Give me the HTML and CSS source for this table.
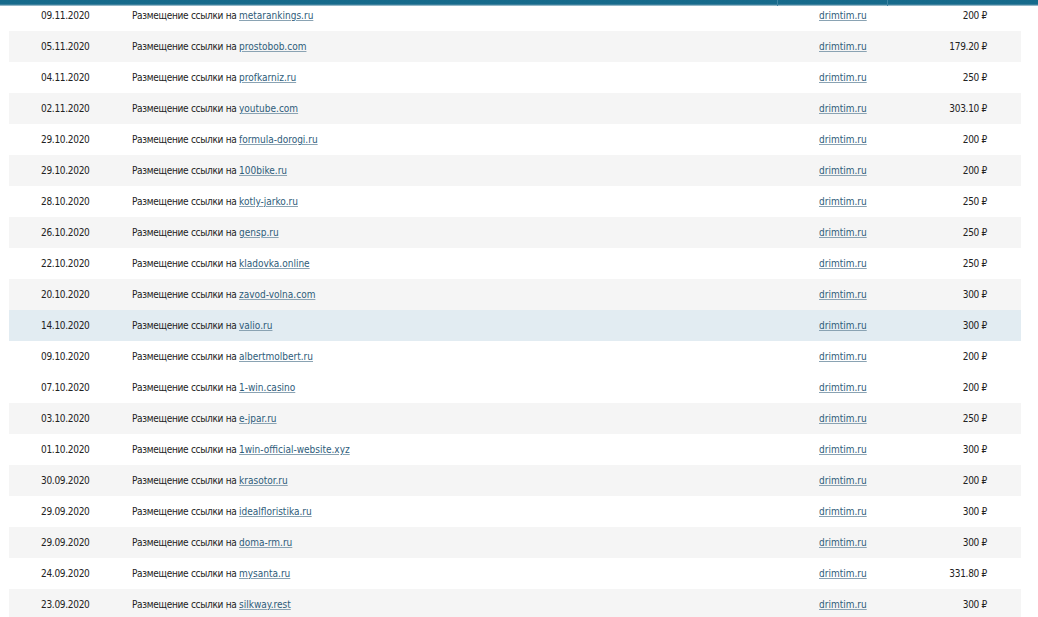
FILE: index.html
```html
<!DOCTYPE html>
<html lang="ru">
<head>
<meta charset="utf-8">
<title>Платежи</title>
<link rel="stylesheet" href="styles.css">
</head>
<body>
<div class="head-bar">
  <div class="hc hc-main"></div>
  <div class="hc hc-site"></div>
  <div class="hc hc-sum"></div>
</div>
<div class="table">
  <div class="row"><div class="c-date">09.11.2020</div><div class="c-desc">Размещение ссылки на <a href="#">metarankings.ru</a></div><div class="c-site"><a href="#">drimtim.ru</a></div><div class="c-sum">200 ₽</div></div>
  <div class="row alt"><div class="c-date">05.11.2020</div><div class="c-desc">Размещение ссылки на <a href="#">prostobob.com</a></div><div class="c-site"><a href="#">drimtim.ru</a></div><div class="c-sum">179.20 ₽</div></div>
  <div class="row"><div class="c-date">04.11.2020</div><div class="c-desc">Размещение ссылки на <a href="#">profkarniz.ru</a></div><div class="c-site"><a href="#">drimtim.ru</a></div><div class="c-sum">250 ₽</div></div>
  <div class="row alt"><div class="c-date">02.11.2020</div><div class="c-desc">Размещение ссылки на <a href="#">youtube.com</a></div><div class="c-site"><a href="#">drimtim.ru</a></div><div class="c-sum">303.10 ₽</div></div>
  <div class="row"><div class="c-date">29.10.2020</div><div class="c-desc">Размещение ссылки на <a href="#">formula-dorogi.ru</a></div><div class="c-site"><a href="#">drimtim.ru</a></div><div class="c-sum">200 ₽</div></div>
  <div class="row alt"><div class="c-date">29.10.2020</div><div class="c-desc">Размещение ссылки на <a href="#">100bike.ru</a></div><div class="c-site"><a href="#">drimtim.ru</a></div><div class="c-sum">200 ₽</div></div>
  <div class="row"><div class="c-date">28.10.2020</div><div class="c-desc">Размещение ссылки на <a href="#">kotly-jarko.ru</a></div><div class="c-site"><a href="#">drimtim.ru</a></div><div class="c-sum">250 ₽</div></div>
  <div class="row alt"><div class="c-date">26.10.2020</div><div class="c-desc">Размещение ссылки на <a href="#">gensp.ru</a></div><div class="c-site"><a href="#">drimtim.ru</a></div><div class="c-sum">250 ₽</div></div>
  <div class="row"><div class="c-date">22.10.2020</div><div class="c-desc">Размещение ссылки на <a href="#">kladovka.online</a></div><div class="c-site"><a href="#">drimtim.ru</a></div><div class="c-sum">250 ₽</div></div>
  <div class="row alt"><div class="c-date">20.10.2020</div><div class="c-desc">Размещение ссылки на <a href="#">zavod-volna.com</a></div><div class="c-site"><a href="#">drimtim.ru</a></div><div class="c-sum">300 ₽</div></div>
  <div class="row hover"><div class="c-date">14.10.2020</div><div class="c-desc">Размещение ссылки на <a href="#">valio.ru</a></div><div class="c-site"><a href="#">drimtim.ru</a></div><div class="c-sum">300 ₽</div></div>
  <div class="row"><div class="c-date">09.10.2020</div><div class="c-desc">Размещение ссылки на <a href="#">albertmolbert.ru</a></div><div class="c-site"><a href="#">drimtim.ru</a></div><div class="c-sum">200 ₽</div></div>
  <div class="row"><div class="c-date">07.10.2020</div><div class="c-desc">Размещение ссылки на <a href="#">1-win.casino</a></div><div class="c-site"><a href="#">drimtim.ru</a></div><div class="c-sum">200 ₽</div></div>
  <div class="row alt"><div class="c-date">03.10.2020</div><div class="c-desc">Размещение ссылки на <a href="#">e-jpar.ru</a></div><div class="c-site"><a href="#">drimtim.ru</a></div><div class="c-sum">250 ₽</div></div>
  <div class="row"><div class="c-date">01.10.2020</div><div class="c-desc">Размещение ссылки на <a href="#">1win-official-website.xyz</a></div><div class="c-site"><a href="#">drimtim.ru</a></div><div class="c-sum">300 ₽</div></div>
  <div class="row alt"><div class="c-date">30.09.2020</div><div class="c-desc">Размещение ссылки на <a href="#">krasotor.ru</a></div><div class="c-site"><a href="#">drimtim.ru</a></div><div class="c-sum">200 ₽</div></div>
  <div class="row"><div class="c-date">29.09.2020</div><div class="c-desc">Размещение ссылки на <a href="#">idealfloristika.ru</a></div><div class="c-site"><a href="#">drimtim.ru</a></div><div class="c-sum">300 ₽</div></div>
  <div class="row alt"><div class="c-date">29.09.2020</div><div class="c-desc">Размещение ссылки на <a href="#">doma-rm.ru</a></div><div class="c-site"><a href="#">drimtim.ru</a></div><div class="c-sum">300 ₽</div></div>
  <div class="row"><div class="c-date">24.09.2020</div><div class="c-desc">Размещение ссылки на <a href="#">mysanta.ru</a></div><div class="c-site"><a href="#">drimtim.ru</a></div><div class="c-sum">331.80 ₽</div></div>
  <div class="row alt"><div class="c-date">23.09.2020</div><div class="c-desc">Размещение ссылки на <a href="#">silkway.rest</a></div><div class="c-site"><a href="#">drimtim.ru</a></div><div class="c-sum">300 ₽</div></div>
</div>
</body>
</html>
```

FILE: styles.css
```css
html, body {
  margin: 0;
  padding: 0;
  background: #ffffff;
}

body {
  font-family: "DejaVu Sans Condensed", "DejaVu Sans", sans-serif;
  font-stretch: condensed;
  font-size: 10px;
  letter-spacing: -0.3px;
  color: #222222;
  overflow: hidden;
}

.head-bar {
  position: fixed;
  top: 0;
  left: 0;
  right: 0;
  height: 6px;
  display: grid;
  grid-template-columns: 777px 111px 1fr;
  background: linear-gradient(#166a8b 0, #176b8c 4px, #5d93ab 5px, #c9dbe4 6px);
  z-index: 2;
}

.hc-site {
  border-left: 1px solid #3f84a2;
  border-right: 1px solid #3f84a2;
}

.table {
  width: 1012px;
  margin-left: 9px;
}

.row {
  display: grid;
  grid-template-columns: 123px 645px 111px 133px;
  height: 31px;
  align-items: center;
  background: #ffffff;
}

.row.alt {
  background: #f5f5f5;
}

.row.hover {
  background: #e2ecf2;
}

.c-date {
  padding-left: 32px;
}

.c-desc {
  white-space: nowrap;
}

.c-site {
  padding-left: 42px;
}

.c-sum {
  text-align: right;
  padding-right: 34px;
}

a {
  color: #2e5c7a;
  letter-spacing: 0;
  text-decoration: underline;
  text-decoration-color: #8aa3b3;
  text-underline-offset: 1px;
}
```
